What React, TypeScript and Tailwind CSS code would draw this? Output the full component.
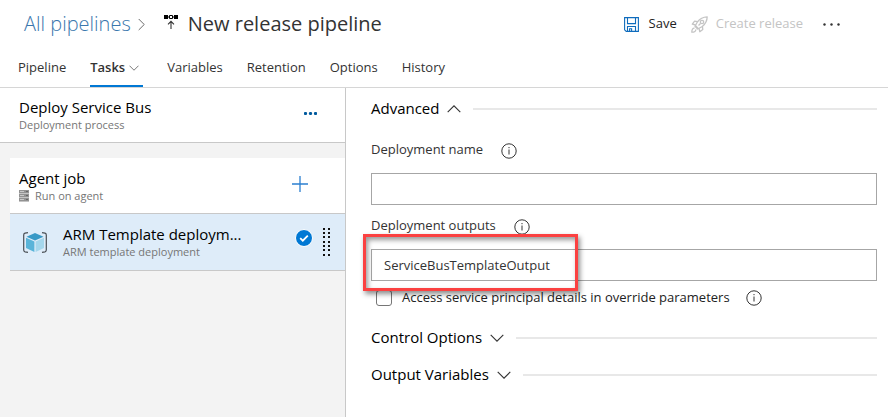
import type { ReactNode } from "react";

function Chevron({ up = false, className = "" }: { up?: boolean; className?: string }) {
  return (
    <svg viewBox="0 0 14 8" className={className} fill="none" stroke="currentColor" strokeWidth="1.1" aria-hidden="true">
      <path d={up ? "M.7 7.2 7 .9l6.300 6.300" : "M.7.8 7 7.100 13.300.8"} />
    </svg>
  );
}

function PipelineIcon() {
  return (
    <svg viewBox="0 0 14 15" className="h-[15px] w-[14px]" aria-hidden="true">
      <path d="M0 0h4v4H0zM10 0h4v4h-4z" fill="#000" />
      <path d="M5.500.5h3v3h-3z" fill="none" stroke="#000" />
      <path d="M4 2h1M9 2h1" stroke="#000" />
      <path d="M7 14V6.500M4 9.300l3-3 3 3" fill="none" stroke="#333" strokeWidth="1.100" />
    </svg>
  );
}

function SaveIcon() {
  return (
    <svg viewBox="0 0 15 15" className="h-[15px] w-[15px]" fill="none" stroke="#0f6cbd" strokeWidth="1.100" aria-hidden="true">
      <path d="M.6.6h13.800v13.800H2.200L.6 12.800z" />
      <path d="M3.500.6v6h8v-6M3.500 14.400V9.500h8v4.900M5.600 14.400v-2.600h2v2.600" />
    </svg>
  );
}

function RocketIcon() {
  return (
    <svg viewBox="0 0 17 17" className="h-[17px] w-[17px]" fill="none" stroke="#c4c4c4" strokeWidth="1.300" strokeLinejoin="round" aria-hidden="true">
      <path d="M16.200.8c-4.200.1-7.200 1.600-9.700 5L4 10.300 6.700 13l4.600-2.500c3.300-2.600 4.800-5.500 4.900-9.700z" />
      <path d="M6.700 5.600 3.600 5.200 1.300 8.200l3.400.8M11.400 10.300l.4 3.100-3 2.300-.8-3.400M4.600 9.800l2.600 2.600M7.500 9.500l2-2" />
      <circle cx="11" cy="6" r="1.700" />
      <path d="M3.600 12.200c-1.800-.2-2.800 1.200-2.800 4 2.800 0 4.200-1 4-2.800" />
    </svg>
  );
}

function ServerIcon() {
  return (
    <svg viewBox="0 0 10 12" className="h-3 w-[10px]" aria-hidden="true">
      <path d="M0 0h10v12H0z" fill="#c4c4c4" />
      <path d="M0 0h10v3H0zM0 4h10v3H0zM0 8h10v3H0z" fill="#929292" />
      <path d="M1 1.500h4M1 5.500h4M1 9.500h4" stroke="#c8c8c8" />
      <path d="M7 1.500h2M7 5.500h2M7 9.500h2" stroke="#666" />
    </svg>
  );
}

function ArmIcon() {
  return (
    <svg viewBox="0 0 24 21" className="h-[21px] w-6" aria-hidden="true">
      <path d="M5 .7 2 1.200Q.7 1.500.7 3v15q0 1.500 1.300 1.800l3 .5M19 .7l3 .5q1.300.3 1.300 1.800v15q0 1.500-1.300 1.800l-3 .5" fill="none" stroke="#4a4f55" strokeWidth="1.200" />
      <path d="M12 1l8.500 3.700L12 8.500 3.500 4.700z" fill="#3999c6" />
      <path d="M3 5.800l8.400 3.700V20L3 16z" fill="#59b4d9" />
      <path d="M21 5.800l-8.400 3.700V20L21 16z" fill="#a5d7ec" />
    </svg>
  );
}

function GripIcon() {
  return (
    <svg viewBox="0 0 7 28" className="h-7 w-[7px]" aria-hidden="true">
      {[0, 4, 8, 13, 17, 21, 26].map((y) => (
        <path key={y} d={`M0 ${y}h2v2H0zM5 ${y}h2v2H5z`} fill="#111" />
      ))}
    </svg>
  );
}

function CheckBadge() {
  return (
    <svg viewBox="0 0 18 18" className="h-[18px] w-[18px]" role="img" aria-label="Selected">
      <circle cx="9" cy="9" r="8.500" fill="#0078d4" stroke="#fff" />
      <path d="M5.200 9.200l2.600 2.500 5-5" fill="none" stroke="#fff" strokeWidth="1.800" />
    </svg>
  );
}

function InfoButton({ label }: { label: string }) {
  return (
    <button type="button" aria-label={label} className="text-[#333]">
      <svg viewBox="0 0 16 16" className="h-4 w-4" fill="none" stroke="currentColor" aria-hidden="true">
        <circle cx="8" cy="8" r="7.200" />
        <path d="M8 6.500v5M8 4v1.200" />
      </svg>
    </button>
  );
}

function MoreDots() {
  return (
    <svg viewBox="0 0 17 3" className="h-[3px] w-[17px]" fill="currentColor" aria-hidden="true">
      <circle cx="1.500" cy="1.500" r="1.200" />
      <circle cx="8.500" cy="1.500" r="1.200" />
      <circle cx="15.500" cy="1.500" r="1.200" />
    </svg>
  );
}

function BoldDots() {
  return (
    <svg viewBox="0 0 13 3" className="h-[3px] w-[13px]" fill="currentColor" aria-hidden="true">
      <circle cx="1.500" cy="1.500" r="1.600" />
      <circle cx="6.500" cy="1.500" r="1.600" />
      <circle cx="11.500" cy="1.500" r="1.600" />
    </svg>
  );
}

function Section({ title, open = false }: { title: string; open?: boolean }) {
  return (
    <h2 className="flex h-5 items-center gap-3">
      <button type="button" aria-expanded={open} className="flex items-center gap-2 text-[15px] leading-5 text-black">
        <span className="pb-0.5">{title}</span>
        <Chevron up={open} className="h-2 w-[14px] text-[#333]" />
      </button>
      <span className="h-0.5 flex-1 bg-[#e8e8e8]" />
    </h2>
  );
}

function Field({ id, label, value, children }: { id: string; label: string; value?: string; children?: ReactNode }) {
  return (
    <div>
      <div className="flex h-5 items-center gap-[18px]">
        <label htmlFor={id} className="text-[13px] leading-5 text-[#333]">{label}</label>
        <span className="flex pt-1"><InfoButton label={`About ${label}`} /></span>
      </div>
      <div className="relative mt-3.5">
        <input id={id} type="text" defaultValue={value} className="block h-8 w-full border border-[#a6a6a6] bg-white px-3 text-[13px] text-[#333] outline-none" />
        {children}
      </div>
    </div>
  );
}

const tabs = ["Pipeline", "Tasks", "Variables", "Retention", "Options", "History"];

export default function App() {
  return (
    <div className="flex min-h-screen flex-col bg-white font-['Open_Sans','Noto_Sans',sans-serif] text-[#333]">
      <header className="border-b border-[#d6d6d6]">
        <div className="flex h-12 items-center pl-6 pr-12">
          <a href="#pipelines" className="text-[20px] font-light leading-6 text-[#3a77ad]">All pipelines</a>
          <Chevron className="mx-1 h-[7px] w-[13px] -rotate-90 text-[#666]" />
          <span className="ml-3 mr-2.5 pb-1"><PipelineIcon /></span>
          <h1 className="text-[20px] leading-6 text-[#333]">New release pipeline</h1>
          <div className="ml-auto flex items-center text-[13px]">
            <button type="button" className="flex items-center gap-2.5 text-[#222]"><SaveIcon />Save</button>
            <button type="button" disabled className="ml-3.5 flex items-center gap-2 text-[#c4c4c4]"><RocketIcon />Create release</button>
            <button type="button" aria-label="More actions" className="ml-5 text-[#333]"><MoreDots /></button>
          </div>
        </div>
        <nav className="flex h-[39px] items-stretch gap-6 pl-[18px] text-[13px]">
          {tabs.map((tab) =>
            tab === "Tasks" ? (
              <a key={tab} href="#tasks" aria-current="page" className="flex items-center gap-1 border-b-2 border-[#0078d4] pr-1 pt-0.5 font-semibold">
                {tab}
                <Chevron className="h-1.5 w-[10px] text-[#555]" />
              </a>
            ) : (
              <a key={tab} href={`#${tab.toLowerCase()}`} className="flex items-center">{tab}</a>
            )
          )}
        </nav>
      </header>

      <div className="flex flex-1">
        <aside className="w-[346px] shrink-0 border-r border-[#c8c8c8] bg-[#f3f3f3]">
          <div className="flex h-[55px] items-center justify-between border-b border-[#c8c8c8] bg-white pl-[19px] pr-7">
            <div>
              <div className="text-[15px] leading-5 text-black">Deploy Service Bus</div>
              <div className="text-[11px] leading-4 text-[#767676]">Deployment process</div>
            </div>
            <button type="button" aria-label="Process actions" className="flex pb-1 text-[#005a9e]"><BoldDots /></button>
          </div>
          <div className="ml-2.5 mt-[15px]">
            <div className="flex h-14 items-center justify-between border-b border-[#c8c8c8] bg-white pl-[9px] pr-[37px]">
              <div>
                <div className="text-[15px] leading-5 text-black">Agent job</div>
                <div className="flex items-center gap-1.5 text-[11px] leading-4 text-[#767676]"><ServerIcon />Run on agent</div>
              </div>
              <button type="button" aria-label="Add a task to the job" className="flex pb-1 text-[#2b7fd0]">
                <svg viewBox="0 0 16 16" className="h-4 w-4" stroke="currentColor" strokeWidth="1.300" aria-hidden="true"><path d="M8 0v16M0 8h16" /></svg>
              </button>
            </div>
            <div className="flex h-[57px] items-center border-b border-[#c8c8c8] bg-[#deecf9] pl-[13px] pr-[15px]">
              <ArmIcon />
              <div className="ml-4 min-w-0 flex-1">
                <div className="text-[15px] leading-5 text-black">ARM Template deploym...</div>
                <div className="text-[11px] leading-4 text-[#767676]">ARM template deployment</div>
              </div>
              <span className="mb-2 mr-2.5"><CheckBadge /></span>
              <GripIcon />
            </div>
          </div>
        </aside>

        <main className="flex-1 pl-[25px] pr-[11px] pt-[11px]">
          <Section title="Advanced" open />
          <div className="mt-5">
            <Field id="deployment-name" label="Deployment name" />
          </div>
          <div className="mt-2.5">
            <Field id="deployment-outputs" label="Deployment outputs" value="ServiceBusTemplateOutput">
              <span className="pointer-events-none absolute -left-2 -top-[15px] h-[57px] w-[215px] border-3 border-[#fb4141] shadow-[2px_3px_5px_rgba(0,0,0,0.45),inset_2px_3px_5px_rgba(0,0,0,0.4)]" />
            </Field>
          </div>
          <div className="mt-[7px] flex h-5 items-center pl-[5px] text-[13px] text-[#222]">
            <input id="access-principal" type="checkbox" className="h-4 w-4 appearance-none rounded-[3px] border border-[#767676] bg-white" />
            <label htmlFor="access-principal" className="ml-2.5 mr-4">Access service principal details in override parameters</label>
            <InfoButton label="About service principal details" />
          </div>
          <div className="mt-5"><Section title="Control Options" /></div>
          <div className="mt-[17px]"><Section title="Output Variables" /></div>
        </main>
      </div>
    </div>
  );
}
